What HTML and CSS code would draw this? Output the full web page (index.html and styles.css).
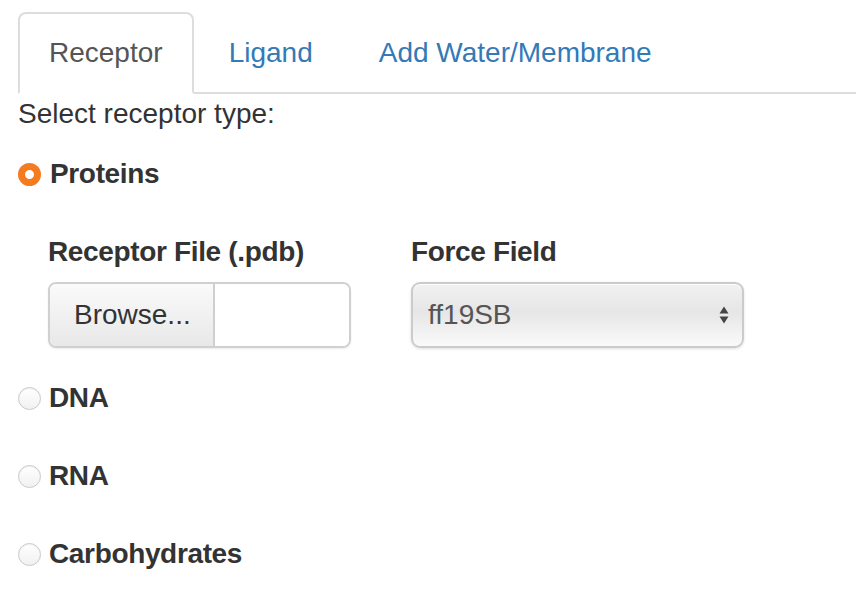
FILE: index.html
```html
<!DOCTYPE html>
<html>
<head>
<meta charset="utf-8">
<link rel="stylesheet" href="styles.css">
</head>
<body>
<div class="page">
  <ul class="tabs">
    <li class="tab active"><a>Receptor</a></li>
    <li class="tab"><a>Ligand</a></li>
    <li class="tab"><a>Add Water/Membrane</a></li>
  </ul>
  <div class="pane">
    <div class="group-label">Select receptor type:</div>
    <div class="radio checked"><span class="dot"></span><span class="rlabel">Proteins</span></div>
    <div class="sub">
      <div class="field file-field">
        <div class="flabel">Receptor File (.pdb)</div>
        <div class="file">
          <span class="browse">Browse...</span>
          <span class="fname"></span>
        </div>
      </div>
      <div class="field select-field">
        <div class="flabel">Force Field</div>
        <div class="select">
          <span class="sval">ff19SB</span>
          <svg class="arrows" width="10" height="18" viewBox="0 0 10 18"><path d="M5 0.5 L9.5 7.5 L0.5 7.5 Z M0.5 10.5 L9.5 10.5 L5 17.5 Z" fill="#444"/></svg>
        </div>
      </div>
    </div>
    <div class="radio first"><span class="dot"></span><span class="rlabel">DNA</span></div>
    <div class="radio"><span class="dot"></span><span class="rlabel">RNA</span></div>
    <div class="radio"><span class="dot"></span><span class="rlabel">Carbohydrates</span></div>
  </div>
</div>
</body>
</html>
```

FILE: styles.css
```css
html, body {
  margin: 0;
  padding: 0;
  background: #fff;
}
body {
  font-family: "Liberation Sans", Arial, Helvetica, sans-serif;
  font-size: 28px;
  line-height: 40px;
  color: #333;
}
.page {
  padding: 12px 0 0 18px;
}
.tabs {
  list-style: none;
  margin: 0;
  padding: 0;
  display: flex;
  border-bottom: 2px solid #ddd;
}
.tab {
  margin-right: 4px;
  margin-bottom: -2px;
}
.tab a {
  display: block;
  padding: 19px 29px;
  border: 2px solid transparent;
  border-radius: 8px 8px 0 0;
  color: #337ab7;
}
.tab.active a {
  color: #555;
  background: #fff;
  border-color: #ddd #ddd transparent #ddd;
}
.group-label {
  height: 40px;
}
.radio {
  display: flex;
  align-items: center;
  margin-top: 38px;
  height: 40px;
}
.radio.checked {
  margin-top: 20px;
}
.radio.first {
  margin-top: 30px;
}
.dot {
  box-sizing: border-box;
  width: 23px;
  height: 23px;
  border-radius: 50%;
  border: 1px solid #c9c9c9;
  background: linear-gradient(#fff, #f1f1f1);
  box-shadow: inset 0 1px 1px rgba(0,0,0,0.06);
  margin-right: 8px;
  flex: none;
}
.radio.checked .dot {
  border: 7px solid #f47b20;
  background: #fff;
  box-shadow: none;
}
.radio.checked .rlabel {
  margin-left: 1px;
}
.rlabel {
  font-weight: bold;
  letter-spacing: -0.35px;
}
.sub {
  display: flex;
  gap: 60px;
  margin-top: 38px;
  padding-left: 30px;
}
.flabel {
  font-weight: bold;
  letter-spacing: -0.35px;
  margin-bottom: 10px;
}
.file {
  display: flex;
  width: 303px;
  height: 66px;
  box-sizing: border-box;
  border: 2px solid #d0d0d0;
  border-radius: 8px;
  overflow: hidden;
  box-shadow: 0 1px 2px rgba(0,0,0,0.08);
}
.browse {
  display: flex;
  align-items: center;
  padding: 0 24px;
  width: 165px;
  box-sizing: border-box;
  background: linear-gradient(#fafafa, #e8e8e8);
  border-right: 2px solid #cfcfcf;
  color: #333;
}
.fname {
  flex: 1;
  background: #fff;
}
.select {
  display: flex;
  align-items: center;
  justify-content: space-between;
  width: 333px;
  height: 66px;
  box-sizing: border-box;
  padding: 0 13px 0 15px;
  border: 2px solid #cbcbcb;
  border-radius: 9px;
  background: linear-gradient(#f1f1f1, #e6e6e6 45%, #fafafa);
  box-shadow: 0 1px 3px rgba(0,0,0,0.12), inset 0 1px 0 #fff;
  color: #555;
}
.arrows {
  display: block;
}
```
